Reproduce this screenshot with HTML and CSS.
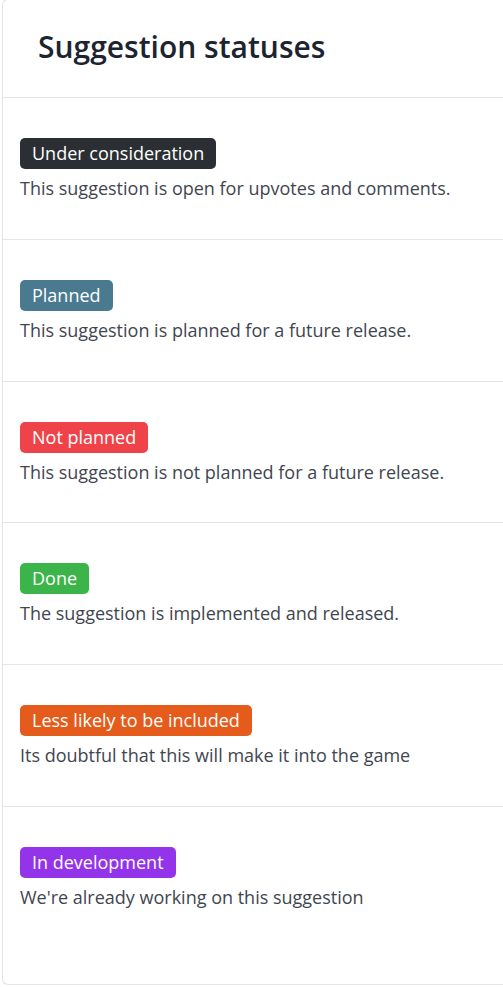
FILE: index.html
```html
<!DOCTYPE html>
<html>
<head>
<meta charset="utf-8">
<link rel="stylesheet" href="styles.css">
</head>
<body>
<div class="card">
  <div class="card-header">
    <h1 class="title">Suggestion statuses</h1>
  </div>
  <div class="status">
    <span class="badge badge-dark">Under consideration</span>
    <p class="desc">This suggestion is open for upvotes and comments.</p>
  </div>
  <div class="status">
    <span class="badge badge-planned">Planned</span>
    <p class="desc">This suggestion is planned for a future release.</p>
  </div>
  <div class="status">
    <span class="badge badge-red">Not planned</span>
    <p class="desc">This suggestion is not planned for a future release.</p>
  </div>
  <div class="status">
    <span class="badge badge-green">Done</span>
    <p class="desc">The suggestion is implemented and released.</p>
  </div>
  <div class="status">
    <span class="badge badge-orange">Less likely to be included</span>
    <p class="desc">Its doubtful that this will make it into the game</p>
  </div>
  <div class="status status-last">
    <span class="badge badge-purple">In development</span>
    <p class="desc">We're already working on this suggestion</p>
  </div>
</div>
</body>
</html>
```
FILE: styles.css
```css
html, body {
  margin: 0;
  padding: 0;
  background: #ffffff;
}
body {
  font-family: "Open Sans", "Noto Sans", sans-serif;
  color: #3f4650;
}
.card {
  margin: -1px 0 0 2px;
  border: 1px solid #e3e5e8;
  border-right: none;
  border-radius: 6px 0 0 6px;
  background: #fff;
  box-shadow: 0 1px 2px rgba(0,0,0,0.04);
}
.card-header {
  height: 98px;
  box-sizing: border-box;
  padding: 0 0 4px 35px;
  display: flex;
  align-items: center;
  border-bottom: 1px solid #e3e5e8;
}
.title {
  margin: 0;
  font-size: 30px;
  font-weight: 600;
  color: #1c2430;
  line-height: 1.2;
}
.status {
  height: 141.8px;
  box-sizing: border-box;
  padding: 40px 0 0 17px;
  border-bottom: 1px solid #e3e5e8;
}
.status-last {
  border-bottom: none;
  height: 177px;
}
.badge {
  display: inline-block;
  height: 31px;
  line-height: 31px;
  padding: 0 12px;
  border-radius: 5px;
  color: #fff;
  font-size: 18px;
  font-weight: 400;
}
.badge-dark { background: #2b2f33; }
.badge-planned { background: #4a7a8f; }
.badge-red { background: #f04349; }
.badge-green { background: #3bb54a; }
.badge-orange { background: #e55b1b; }
.badge-purple { background: #9333ea; }
.desc {
  margin: 6px 0 0 0;
  font-size: 18px;
  line-height: 26px;
}
```
